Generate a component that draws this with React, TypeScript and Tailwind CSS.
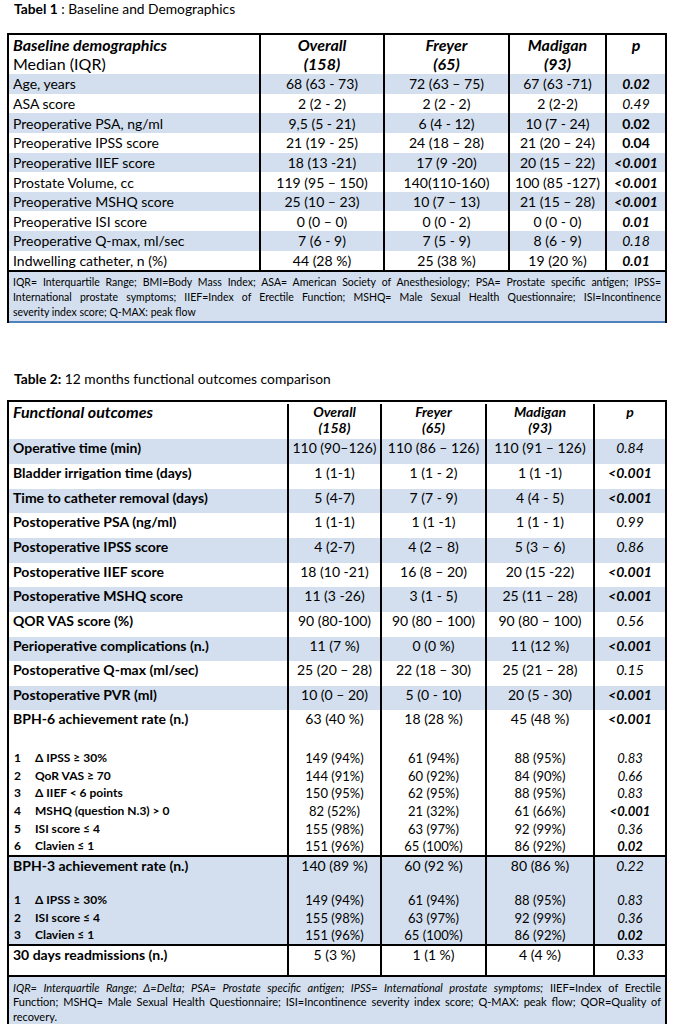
import React from "react";

const pCls = (s: string) =>
  s === "bi" ? "font-bold italic" : s === "b" ? "font-bold" : s === "i" ? "italic" : "";

const SHADE = "bg-[#d3dfee]";
const T1 = "grid grid-cols-[250px_124px_125px_97px_60px]";
const T2 = "grid grid-cols-[278px_93px_105px_108px_72px]";

type Row = [string, string, string, string, string, string];

const t1Rows: Row[] = [
  ["Age, years", "68 (63 - 73)", "72 (63 – 75)", "67 (63 -71)", "0.02", "bi"],
  ["ASA score", "2 (2 - 2)", "2 (2 - 2)", "2 (2-2)", "0.49", "i"],
  ["Preoperative PSA, ng/ml", "9,5 (5 - 21)", "6 (4 - 12)", "10 (7 - 24)", "0.02", "b"],
  ["Preoperative IPSS score", "21 (19 - 25)", "24 (18 – 28)", "21 (20 – 24)", "0.04", "b"],
  ["Preoperative IIEF score", "18 (13 -21)", "17 (9 -20)", "20 (15 – 22)", "<0.001", "bi"],
  ["Prostate Volume, cc", "119 (95 – 150)", "140(110-160)", "100 (85 -127)", "<0.001", "bi"],
  ["Preoperative MSHQ score", "25 (10 – 23)", "10 (7 – 13)", "21 (15 – 28)", "<0.001", "bi"],
  ["Preoperative ISI score", "0 (0 – 0)", "0 (0 - 2)", "0 (0 - 0)", "0.01", "bi"],
  ["Preoperative Q-max, ml/sec", "7 (6 - 9)", "7 (5 - 9)", "8 (6 - 9)", "0.18", "i"],
  ["Indwelling catheter, n (%)", "44 (28 %)", "25 (38 %)", "19 (20 %)", "0.01", "bi"],
];

const t2Rows: Row[] = [
  ["Operative time (min)", "110 (90–126)", "110 (86 – 126)", "110 (91 – 126)", "0.84", "i"],
  ["Bladder irrigation time (days)", "1 (1-1)", "1 (1 - 2)", "1 (1 -1)", "<0.001", "bi"],
  ["Time to catheter removal (days)", "5 (4-7)", "7 (7 - 9)", "4 (4 - 5)", "<0.001", "bi"],
  ["Postoperative PSA (ng/ml)", "1 (1-1)", "1 (1 -1)", "1 (1 - 1)", "0.99", "i"],
  ["Postoperative IPSS score", "4 (2-7)", "4 (2 – 8)", "5 (3 – 6)", "0.86", "i"],
  ["Postoperative IIEF score", "18 (10 -21)", "16 (8 – 20)", "20 (15 -22)", "<0.001", "bi"],
  ["Postoperative MSHQ score", "11 (3 -26)", "3 (1 - 5)", "25 (11 – 28)", "<0.001", "bi"],
  ["QOR VAS score (%)", "90 (80-100)", "90 (80 – 100)", "90 (80 – 100)", "0.56", "i"],
  ["Perioperative complications (n.)", "11 (7 %)", "0 (0 %)", "11 (12 %)", "<0.001", "bi"],
  ["Postoperative Q-max (ml/sec)", "25 (20 – 28)", "22 (18 – 30)", "25 (21 – 28)", "0.15", "i"],
  ["Postoperative PVR (ml)", "10 (0 – 20)", "5 (0 - 10)", "20 (5 - 30)", "<0.001", "bi"],
];

const bph6: Row[] = [
  ["1|Δ IPSS ≥ 30%", "149 (94%)", "61 (94%)", "88 (95%)", "0.83", "i"],
  ["2|QoR VAS ≥ 70", "144 (91%)", "60 (92%)", "84 (90%)", "0.66", "i"],
  ["3|Δ IIEF < 6 points", "150 (95%)", "62 (95%)", "88 (95%)", "0.83", "i"],
  ["4|MSHQ (question N.3) > 0", "82 (52%)", "21 (32%)", "61 (66%)", "<0.001", "bi"],
  ["5|ISI score ≤ 4", "155 (98%)", "63 (97%)", "92 (99%)", "0.36", "i"],
  ["6|Clavien ≤ 1", "151 (96%)", "65 (100%)", "86 (92%)", "0.02", "bi"],
];

const bph3: Row[] = [
  ["1|Δ IPSS ≥ 30%", "149 (94%)", "61 (94%)", "88 (95%)", "0.83", "i"],
  ["2|ISI score ≤ 4", "155 (98%)", "63 (97%)", "92 (99%)", "0.36", "i"],
  ["3|Clavien ≤ 1", "151 (96%)", "65 (100%)", "86 (92%)", "0.02", "bi"],
];

const C = "flex justify-center border-l-2 border-black whitespace-nowrap";

function T1Row({ r, shade }: { r: Row; shade: boolean }) {
  return (
    <div className={`${T1} h-[19.65px] text-[14px] leading-[17px] ${shade ? SHADE : ""}`}>
      <div className="flex items-center pl-[4px] whitespace-nowrap">{r[0]}</div>
      <div className={`${C} items-center`}>{r[1]}</div>
      <div className={`${C} items-center`}>{r[2]}</div>
      <div className={`${C} items-center`}>{r[3]}</div>
      <div className={`${C} items-center ${pCls(r[5])}`}>{r[4]}</div>
    </div>
  );
}

function T2Row({ r, shade }: { r: Row; shade: boolean }) {
  return (
    <div className={`${T2} h-[24.65px] text-[14px] leading-[16px] ${shade ? SHADE : ""}`}>
      <div className="flex items-start pt-[1px] pl-[4px] font-bold whitespace-nowrap">{r[0]}</div>
      <div className={`${C} items-start pt-[1px]`}>{r[1]}</div>
      <div className={`${C} items-start pt-[1px]`}>{r[2]}</div>
      <div className={`${C} items-start pt-[1px]`}>{r[3]}</div>
      <div className={`${C} items-start pt-[1px] ${pCls(r[5])}`}>{r[4]}</div>
    </div>
  );
}

function SubRow({ r }: { r: Row }) {
  const [n, label] = r[0].split("|");
  return (
    <div className={`${T2} h-[17.6px] text-[13px] leading-[16px]`}>
      <div className="flex items-center pl-[5px] font-bold text-[12px] whitespace-nowrap">
        <span className="w-[21px]">{n}</span>
        <span>{label}</span>
      </div>
      <div className={`${C} items-center`}>{r[1]}</div>
      <div className={`${C} items-center`}>{r[2]}</div>
      <div className={`${C} items-center`}>{r[3]}</div>
      <div className={`${C} items-center ${pCls(r[5])}`}>{r[4]}</div>
    </div>
  );
}

function Spacer({ h }: { h: string }) {
  return (
    <div className={`${T2} ${h}`}>
      <div />
      <div className="border-l-2 border-black" />
      <div className="border-l-2 border-black" />
      <div className="border-l-2 border-black" />
      <div className="border-l-2 border-black" />
    </div>
  );
}

const J = "[text-align-last:justify] text-justify whitespace-nowrap";

export default function App() {
  return (
    <div className="w-[674px] h-[1024px] overflow-hidden bg-white text-black font-['Lato',sans-serif]">
      {/* Title 1 */}
      <div className="pt-[1px] pl-[14px] text-[13.8px] leading-[16px] h-[33px]">
        <span className="font-bold">Tabel 1</span> : Baseline and Demographics
      </div>

      {/* Table 1 */}
      <div className="ml-[7px] w-[660px] border-x-2 border-t-2 border-black">
        <div className={`${T1} h-[39px] text-[16px] leading-[19px]`}>
          <div className="pl-[4px]">
            <div className="font-bold italic">Baseline demographics</div>
            <div>Median (IQR)</div>
          </div>
          <div className="border-l-2 border-black text-center font-bold italic">
            <div>Overall</div>
            <div>(158)</div>
          </div>
          <div className="border-l-2 border-black text-center font-bold italic">
            <div>Freyer</div>
            <div>(65)</div>
          </div>
          <div className="border-l-2 border-black text-center font-bold italic">
            <div>Madigan</div>
            <div>(93)</div>
          </div>
          <div className="border-l-2 border-black text-center font-bold italic">
            <div>p</div>
          </div>
        </div>
        {t1Rows.map((r, i) => (
          <T1Row key={i} r={r} shade={i % 2 === 0} />
        ))}
        <div className={`border-t-2 border-black border-b-2 border-b-[#4f81bd] ${SHADE} px-[4px] pt-[3px] pb-[1px] text-[10.5px] leading-[15px]`}>
          <div className={J}>
            IQR= Interquartile Range; BMI=Body Mass Index; ASA= American Society of Anesthesiology; PSA= Prostate specific antigen; IPSS=
          </div>
          <div className={J}>
            International prostate symptoms; IIEF=Index of Erectile Function; MSHQ= Male Sexual Health Questionnaire; ISI=Incontinence
          </div>
          <div>severity index score; Q-MAX: peak flow</div>
        </div>
      </div>

      {/* Title 2 */}
      <div className="pt-[48px] pl-[14px] text-[13.8px] leading-[16px] h-[77px]">
        <span className="font-bold">Table 2:</span> 12 months functional outcomes comparison
      </div>

      {/* Table 2 */}
      <div className="ml-[7px] w-[660px] border-x-2 border-t-2 border-black">
        <div className={`${T2} h-[37px] text-[14px] leading-[16px] pt-[2px]`}>
          <div className="pl-[4px] font-bold italic text-[16px]">Functional outcomes</div>
          <div className="border-l-2 border-black text-center font-bold italic">
            <div>Overall</div>
            <div>(158)</div>
          </div>
          <div className="border-l-2 border-black text-center font-bold italic">
            <div>Freyer</div>
            <div>(65)</div>
          </div>
          <div className="border-l-2 border-black text-center font-bold italic">
            <div>Madigan</div>
            <div>(93)</div>
          </div>
          <div className="border-l-2 border-black text-center font-bold italic">
            <div>p</div>
          </div>
        </div>
        {t2Rows.map((r, i) => (
          <T2Row key={i} r={r} shade={i % 2 === 0} />
        ))}
        <T2Row r={["BPH-6 achievement rate (n.)", "63 (40 %)", "18 (28 %)", "45 (48 %)", "<0.001", "bi"]} shade={false} />
        <Spacer h="h-[14.4px]" />
        {bph6.map((r, i) => (
          <SubRow key={i} r={r} />
        ))}
        <div className={`border-t-2 border-black ${SHADE}`}>
          <T2Row r={["BPH-3 achievement rate (n.)", "140 (89 %)", "60 (92 %)", "80 (86 %)", "0.22", "i"]} shade={false} />
          <Spacer h="h-[9.5px]" />
          {bph3.map((r, i) => (
            <SubRow key={i} r={r} />
          ))}
        </div>
        <div className="border-t-2 border-black">
          <div className={`${T2} h-[29px] text-[14px] leading-[16px]`}>
            <div className="pl-[4px] pt-[1px] font-bold">30 days readmissions (n.)</div>
            <div className={`${C} pt-[1px]`}>5 (3 %)</div>
            <div className={`${C} pt-[1px]`}>1 (1 %)</div>
            <div className={`${C} pt-[1px]`}>4 (4 %)</div>
            <div className={`${C} pt-[1px] italic`}>0.33</div>
          </div>
        </div>
        <div className={`border-t-2 border-black border-b-2 border-b-[#4f81bd] ${SHADE} px-[4px] pt-[4px] pb-0 text-[11px] leading-[14.5px]`}>
          <div className={J}>
            <span className="italic">
              IQR= Interquartile Range; Δ=Delta; PSA= Prostate specific antigen; IPSS= International prostate symptoms;
            </span>{" "}
            IIEF=Index of Erectile
          </div>
          <div className={J}>
            Function; MSHQ= Male Sexual Health Questionnaire; ISI=Incontinence severity index score; Q-MAX: peak flow; QOR=Quality of
          </div>
          <div>recovery.</div>
        </div>
      </div>
    </div>
  );
}
